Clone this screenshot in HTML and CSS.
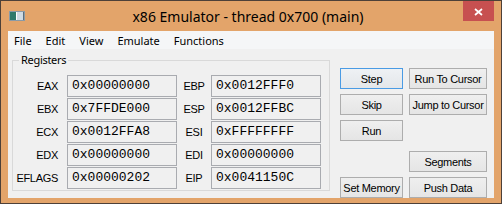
FILE: index.html
```html
<!DOCTYPE html>
<html>
<head>
<meta charset="utf-8">
<link rel="stylesheet" href="styles.css">
</head>
<body>
<div class="window">
  <div class="titlebar">
    <div class="app-icon">
      <svg width="16" height="10" viewBox="0 0 16 10">
        <rect x="0" y="0" width="16" height="10" fill="#8a9aa6"/>
        <rect x="1" y="1" width="6" height="8" fill="#2f7a6c"/>
        <rect x="7" y="1" width="1" height="8" fill="#ffffff"/>
        <rect x="8" y="1" width="6" height="8" fill="#cfdbe4"/>
        <rect x="14" y="1" width="1" height="8" fill="#5b6e7c"/>
      </svg>
    </div>
    <div class="title">x86 Emulator - thread 0x700 (main)</div>
    <div class="close">
      <svg width="31" height="20" viewBox="0 0 31 20">
        <path d="M12 8 L19 14 M19 8 L12 14" stroke="#ffffff" stroke-width="1.7" fill="none"/>
      </svg>
    </div>
  </div>
  <div class="client">
    <ul class="menubar">
      <li>File</li>
      <li>Edit</li>
      <li>View</li>
      <li>Emulate</li>
      <li>Functions</li>
    </ul>
    <div class="content">
      <fieldset class="group">
        <legend>Registers</legend>
        <div class="regs">
          <span class="lbl1">EAX</span><span class="field">0x00000000</span><span class="lbl2">EBP</span><span class="field">0x0012FFF0</span>
          <span class="lbl1">EBX</span><span class="field">0x7FFDE000</span><span class="lbl2">ESP</span><span class="field">0x0012FFBC</span>
          <span class="lbl1">ECX</span><span class="field">0x0012FFA8</span><span class="lbl2">ESI</span><span class="field">0xFFFFFFFF</span>
          <span class="lbl1">EDX</span><span class="field">0x00000000</span><span class="lbl2">EDI</span><span class="field">0x00000000</span>
          <span class="lbl1">EFLAGS</span><span class="field">0x00000202</span><span class="lbl2">EIP</span><span class="field">0x0041150C</span>
        </div>
      </fieldset>
      <div class="buttons">
        <button class="btn btn-default">Step</button>
        <button class="btn">Run To Cursor</button>
        <button class="btn">Skip</button>
        <button class="btn">Jump to Cursor</button>
        <button class="btn">Run</button>
        <span class="empty"></span>
        <span class="empty"></span>
        <button class="btn btn-low">Segments</button>
        <button class="btn">Set Memory</button>
        <button class="btn">Push Data</button>
      </div>
    </div>
  </div>
</div>
</body>
</html>
```
FILE: styles.css
```css
html, body {
  margin: 0;
  padding: 0;
  background: #ffffff;
}

.window {
  box-sizing: border-box;
  width: 502px;
  height: 204px;
  border: 1px solid #4d4038;
  background: #e3a46a;
  display: flex;
  flex-direction: column;
}

.titlebar {
  height: 30px;
  display: grid;
  grid-template-columns: 1fr auto 1fr;
  flex: none;
}

.app-icon {
  padding: 10px 0 0 8px;
  line-height: 0;
}

.title {
  font-family: "Noto Sans", sans-serif;
  font-size: 14px;
  line-height: 30px;
  padding-top: 1px;
  padding-right: 6px;
  color: #000000;
  white-space: nowrap;
}

.close {
  justify-self: end;
  align-self: start;
  width: 31px;
  height: 20px;
  margin-right: 7px;
  background: #c75050;
  line-height: 0;
}

.client {
  flex: 1;
  margin: 0 7px 7px 7px;
  background: #f0f0f0;
  display: flex;
  flex-direction: column;
}

.menubar {
  list-style: none;
  margin: 0;
  padding: 1px 0 0 6px;
  height: 18px;
  box-sizing: border-box;
  background: #f5f6f7;
  display: flex;
  gap: 14px;
  font-family: "Noto Sans", sans-serif;
  font-size: 11px;
  line-height: 17px;
  color: #000000;
}

.content {
  display: flex;
  padding: 4px 7px 0 4px;
}

.group {
  margin: 0;
  padding: 8px 8px 1px 0;
  border: 1px solid #d9d9d9;
  align-self: flex-start;
  min-width: 0;
}

.group legend {
  margin-left: 6px;
  padding: 0 2px;
  font-family: "Noto Sans", sans-serif;
  font-size: 11px;
  letter-spacing: -0.3px;
  line-height: 14px;
  color: #000000;
}

.regs {
  display: grid;
  grid-template-columns: 54px 110px 34px 110px;
  grid-auto-rows: 22px;
  row-gap: 1px;
}

.lbl1, .lbl2 {
  font-family: "Liberation Sans", Arial, sans-serif;
  font-size: 11px;
  letter-spacing: -0.3px;
  line-height: 22px;
  color: #000000;
}

.lbl1 {
  text-align: right;
  padding-right: 9px;
}

.lbl2 {
  text-align: center;
}

.field {
  box-sizing: border-box;
  border: 1px solid #a9abb0;
  background: #f0f0f0;
  font-family: "Liberation Mono", "Courier New", monospace;
  font-size: 13px;
  line-height: 20px;
  padding-left: 4px;
  color: #000000;
  white-space: nowrap;
}

.buttons {
  margin: 15px 0 0 10px;
  display: grid;
  grid-template-columns: 63px 78px;
  grid-template-rows: 21px 21px 21px 26px 21px;
  column-gap: 6px;
  row-gap: 5px;
  align-self: flex-start;
}

.btn {
  box-sizing: border-box;
  height: 21px;
  margin: 0;
  padding: 0;
  border: 1px solid #adadad;
  border-radius: 0;
  background: linear-gradient(#efefef, #e5e5e5);
  font-family: "Liberation Sans", Arial, sans-serif;
  font-size: 11px;
  letter-spacing: -0.3px;
  color: #000000;
  white-space: nowrap;
}

.btn-default {
  border-color: #4a9be4;
  background: linear-gradient(#eef1f4, #e4e7ea);
}

.btn-low {
  align-self: end;
}
```
